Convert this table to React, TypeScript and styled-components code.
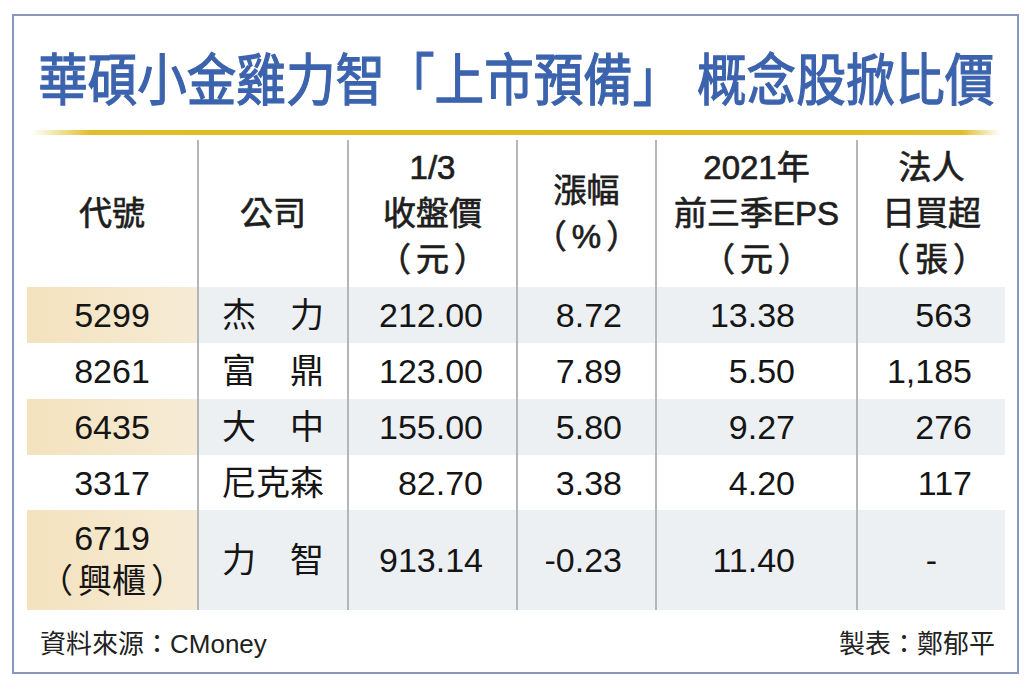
import React from "react";
import styled, { createGlobalStyle } from "styled-components";

const GlobalStyle = createGlobalStyle`
  html, body {
    margin: 0;
    padding: 0;
    background: #ffffff;
  }
  body {
    font-family: "Liberation Sans", "Noto Sans CJK TC", sans-serif;
    color: #1a1a1a;
    text-spacing-trim: space-all;
  }
`;

const COLUMNS = "170px 150px 169px 139px 201px 149px";

interface CellProps {
  align?: "center" | "right";
  pad?: number;
  tint?: "beige" | "gray" | "none";
}

interface RowProps {
  height: number;
}

const Frame = styled.div`
  box-sizing: border-box;
  margin: 14px 0 0 12px;
  width: 1007px;
  height: 660px;
  border: 2px solid #8797c0;
  padding: 0 12px 0 13px;
  display: flex;
  flex-direction: column;
`;

const TitleWrap = styled.div`
  padding-top: 26px;
  height: 68px;
  margin-bottom: 20px;
  display: flex;
  justify-content: center;
`;

const Title = styled.h1`
  margin: 0;
  font-family: "Noto Sans CJK TC", sans-serif;
  font-weight: 400;
  -webkit-text-stroke: 1.3px #3c63ad;
  font-size: 56px;
  line-height: 68px;
  color: #3c63ad;
  white-space: nowrap;
  transform: scaleX(0.885);
  word-spacing: 4px;
`;

const GoldLine = styled.div`
  height: 5px;
  margin: 0 4px 0 5px;
  background: linear-gradient(
    to right,
    rgba(226, 192, 40, 0) 0%,
    #e1bf2a 6%,
    #dfbb22 50%,
    #e1bf2a 96%,
    rgba(226, 192, 40, 0) 100%
  );
`;

const Table = styled.div`
  margin-top: 5px;
  display: flex;
  flex-direction: column;
`;

const Row = styled.div<RowProps>`
  display: grid;
  grid-template-columns: ${COLUMNS};
  height: ${({ height }) => height}px;
`;

const Cell = styled.div<CellProps>`
  box-sizing: border-box;
  display: flex;
  align-items: center;
  justify-content: ${({ align }) => (align === "right" ? "flex-end" : "center")};
  padding-right: ${({ pad }) => pad || 0}px;
  font-size: 34px;
  line-height: 42px;
  color: #151515;
  background: ${({ tint }) =>
    tint === "beige"
      ? "linear-gradient(to right, #f3e2bd, #f6ebd6)"
      : tint === "gray"
      ? "#edf0f3"
      : "transparent"};
  &:not(:first-child) {
    border-left: 2px solid #b4b6ba;
  }
`;

const HeadCell = styled.div`
  box-sizing: border-box;
  display: flex;
  flex-direction: column;
  align-items: center;
  justify-content: center;
  font-size: 33px;
  line-height: 46px;
  font-weight: 400;
  -webkit-text-stroke: 0.7px #1e1e1e;
  color: #1e1e1e;
  &:not(:first-child) {
    border-left: 2px solid #b4b6ba;
  }
`;

const ParenInner = styled.span`
  padding: 0 5px;
`;

const Paren: React.FC<{ children: React.ReactNode }> = ({ children }) => (
  <span>
    （<ParenInner>{children}</ParenInner>）
  </span>
);

const Stack = styled.div`
  display: flex;
  flex-direction: column;
  align-items: center;
  line-height: 43px;
`;

const Footer = styled.div`
  flex: 1;
  display: flex;
  align-items: center;
  justify-content: space-between;
  padding: 0 10px 0 13px;
  font-size: 26px;
  color: #222222;
`;

interface StockRow {
  code: React.ReactNode;
  name: string;
  close: string;
  change: string;
  eps: string;
  net: string;
  height: number;
}

const rows: StockRow[] = [
  { code: "5299", name: "杰　力", close: "212.00", change: "8.72", eps: "13.38", net: "563", height: 56 },
  { code: "8261", name: "富　鼎", close: "123.00", change: "7.89", eps: "5.50", net: "1,185", height: 56 },
  { code: "6435", name: "大　中", close: "155.00", change: "5.80", eps: "9.27", net: "276", height: 56 },
  { code: "3317", name: "尼克森", close: "82.70", change: "3.38", eps: "4.20", net: "117", height: 55 },
  {
    code: (
      <Stack>
        <span>6719</span>
        <Paren>興櫃</Paren>
      </Stack>
    ),
    name: "力　智",
    close: "913.14",
    change: "-0.23",
    eps: "11.40",
    net: "-",
    height: 100,
  },
];

const App: React.FC = () => {
  return (
    <>
      <GlobalStyle />
      <Frame>
        <TitleWrap>
          <Title>華碩小金雞力智「上市預備」 概念股掀比價</Title>
        </TitleWrap>
        <GoldLine />
        <Table>
          <Row height={147}>
            <HeadCell>代號</HeadCell>
            <HeadCell>公司</HeadCell>
            <HeadCell>
              <span>1/3</span>
              <span>收盤價</span>
              <Paren>元</Paren>
            </HeadCell>
            <HeadCell>
              <span>漲幅</span>
              <Paren>%</Paren>
            </HeadCell>
            <HeadCell>
              <span>2021年</span>
              <span>前三季EPS</span>
              <Paren>元</Paren>
            </HeadCell>
            <HeadCell>
              <span>法人</span>
              <span>日買超</span>
              <Paren>張</Paren>
            </HeadCell>
          </Row>
          {rows.map((r, i) => {
            const shaded = i % 2 === 0;
            const tint = shaded ? "gray" : "none";
            return (
              <Row key={i} height={r.height}>
                <Cell tint={shaded ? "beige" : "none"}>{r.code}</Cell>
                <Cell tint={tint}>{r.name}</Cell>
                <Cell tint={tint} align="right" pad={33}>
                  {r.close}
                </Cell>
                <Cell tint={tint} align="right" pad={33}>
                  {r.change}
                </Cell>
                <Cell tint={tint} align="right" pad={61}>
                  {r.eps}
                </Cell>
                {r.net === "-" ? (
                  <Cell tint={tint}>{r.net}</Cell>
                ) : (
                  <Cell tint={tint} align="right" pad={33}>
                    {r.net}
                  </Cell>
                )}
              </Row>
            );
          })}
        </Table>
        <Footer>
          <span>資料來源：CMoney</span>
          <span>製表：鄭郁平</span>
        </Footer>
      </Frame>
    </>
  );
};

export default App;
